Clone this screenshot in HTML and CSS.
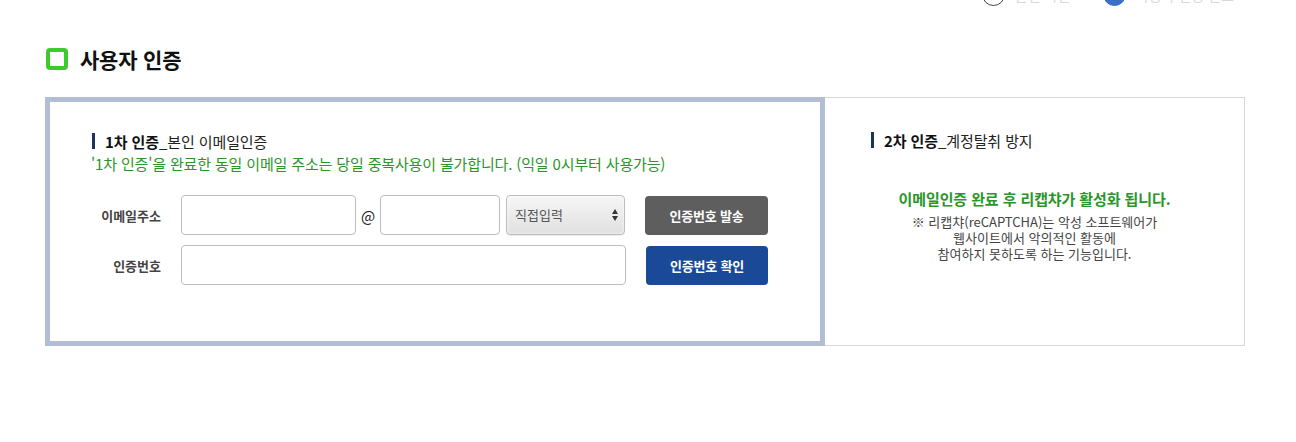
FILE: index.html
```html
<!DOCTYPE html>
<html lang="ko">
<head>
<meta charset="utf-8">
<link rel="stylesheet" href="styles.css">
</head>
<body>
<div class="page">
  <div class="steps">
    <div class="step"><span class="dot"></span><span class="step-text">본인 확인</span></div>
    <div class="step on"><span class="dot"></span><span class="step-text">사용자 인증 완료</span></div>
  </div>

  <h2 class="title"><span class="title-icon"></span>사용자 인증</h2>

  <div class="auth">
    <div class="auth-left">
      <h3 class="sub"><span class="bar"></span><b>1차 인증</b>_본인 이메일인증</h3>
      <p class="notice">'1차 인증'을 완료한 동일 이메일 주소는 당일 중복사용이 불가합니다. (익일 0시부터 사용가능)</p>
      <div class="row">
        <label class="lbl">이메일주소</label>
        <input class="inp w-id" type="text">
        <span class="at">@</span>
        <input class="inp w-dom" type="text">
        <div class="sel">직접입력<span class="arrows"><i class="up"></i><i class="down"></i></span></div>
        <button class="btn btn-gray">인증번호 발송</button>
      </div>
      <div class="row">
        <label class="lbl">인증번호</label>
        <input class="inp w-code" type="text">
        <button class="btn btn-blue">인증번호 확인</button>
      </div>
    </div>
    <div class="auth-right">
      <h3 class="sub"><span class="bar"></span><b>2차 인증</b>_계정탈취 방지</h3>
      <p class="cap-green">이메일인증 완료 후 리캡챠가 활성화 됩니다.</p>
      <p class="cap-gray">※ 리캡챠(reCAPTCHA)는 악성 소프트웨어가<br>웹사이트에서 악의적인 활동에<br>참여하지 못하도록 하는 기능입니다.</p>
    </div>
  </div>
</div>
</body>
</html>
```

FILE: styles.css
```css
* { box-sizing: border-box; }
html, body { margin: 0; padding: 0; background: #fff; }
body {
  font-family: "Noto Sans CJK KR", "Noto Sans", sans-serif;
  color: #222;
}
.page {
  width: 1296px;
  height: 442px;
  overflow: hidden;
  padding-left: 45px;
}

/* steps (cut off at top) */
.steps {
  display: flex;
  justify-content: flex-end;
  gap: 16px;
  height: 6px;
  margin-top: -17px;
  padding-right: 62px;
  align-items: flex-start;
}
.step {
  display: flex;
  align-items: flex-start;
  gap: 10px;
}
.dot {
  width: 23px;
  height: 23px;
  border-radius: 50%;
  border: 1px solid #444;
  background: #fff;
  display: inline-block;
}
.step.on .dot { background: #3a70c5; border-color: #3a70c5; }
.step-text {
  font-size: 14px;
  color: #d8d8d8;
  line-height: 14px;
  margin-top: 5px;
}
.step:first-child .step-text { width: 72px; }

.title {
  display: flex;
  align-items: center;
  margin: 58px 0 0 0;
  height: 24px;
  font-size: 21px;
  font-weight: 700;
  color: #111;
  letter-spacing: -0.2px;
}
.title-icon {
  width: 22px;
  height: 22px;
  border: 4px solid #3ccb2a;
  border-radius: 4px;
  margin: 0 12px 0 1px;
}

.auth {
  display: flex;
  width: 1200px;
  height: 249px;
  margin-top: 26px;
  border: 1px solid #d8d8d8;
}
.auth-left {
  width: 780px;
  margin: -1px 0 -1px -1px;
  border: 5px solid #b2bed3;
  padding: 29px 0 0 41px;
}
.auth-right {
  flex: 1;
  padding: 32px 0 0 45px;
  text-align: center;
}

.sub {
  display: flex;
  align-items: center;
  margin: 0;
  height: 20px;
  font-size: 15px;
  font-weight: 400;
  color: #222;
  letter-spacing: -0.1px;
}
.sub b { font-weight: 700; color: #111; }
.bar {
  width: 3px;
  height: 16px;
  background: #16355f;
  margin: 0 10px 0 1px;
}
.notice {
  margin: 2px 0 0 0;
  font-size: 15px;
  line-height: 22px;
  color: #2a962a;
  letter-spacing: -0.15px;
}
.row {
  display: flex;
  align-items: center;
  height: 40px;
}
.notice + .row { margin-top: 20px; }
.row + .row { margin-top: 10px; }
.lbl {
  width: 70px;
  margin-right: 20px;
  text-align: right;
  font-size: 13px;
  font-weight: 700;
  color: #444;
}
.inp {
  height: 40px;
  border: 1px solid #bdbdbd;
  border-radius: 4px;
  background: #fff;
  padding: 0 8px;
  font: inherit;
  outline: none;
}
.w-id { width: 175px; }
.w-dom { width: 120px; }
.w-code { width: 445px; }
.at {
  width: 24px;
  text-align: center;
  font-size: 15px;
  color: #222;
}
.sel {
  position: relative;
  width: 119px;
  height: 40px;
  margin-left: 6px;
  border: 1px solid #bdbdbd;
  border-radius: 4px;
  background: linear-gradient(#f6f6f6, #e0e0e0);
  box-shadow: inset 0 0 3px rgba(255,255,255,0.9), 0 1px 1px rgba(0,0,0,0.08);
  font-size: 13px;
  color: #555;
  padding: 9px 0 0 8px;
}
.arrows {
  position: absolute;
  right: 6px;
  top: 13px;
  display: flex;
  flex-direction: column;
  gap: 2px;
}
.arrows i {
  width: 0;
  height: 0;
  border-left: 3px solid transparent;
  border-right: 3px solid transparent;
}
.arrows .up { border-bottom: 5px solid #333; }
.arrows .down { border-top: 5px solid #333; }
.btn {
  height: 39px;
  width: 123px;
  margin-left: 20px;
  border: 0;
  border-radius: 4px;
  color: #fff;
  font: inherit;
  font-size: 13px;
  font-weight: 700;
  letter-spacing: -0.2px;
}
.btn-gray { background: #5e5e5e; }
.btn-blue { background: #1a4a97; width: 122px; }

.cap-green {
  margin: 39px 45px 0 0;
  font-size: 15px;
  font-weight: 700;
  line-height: 20px;
  color: #2a962a;
  letter-spacing: -0.1px;
}
.cap-gray {
  margin: 5px 45px 0 0;
  font-size: 13px;
  line-height: 16px;
  color: #444;
  letter-spacing: 0;
}
```
